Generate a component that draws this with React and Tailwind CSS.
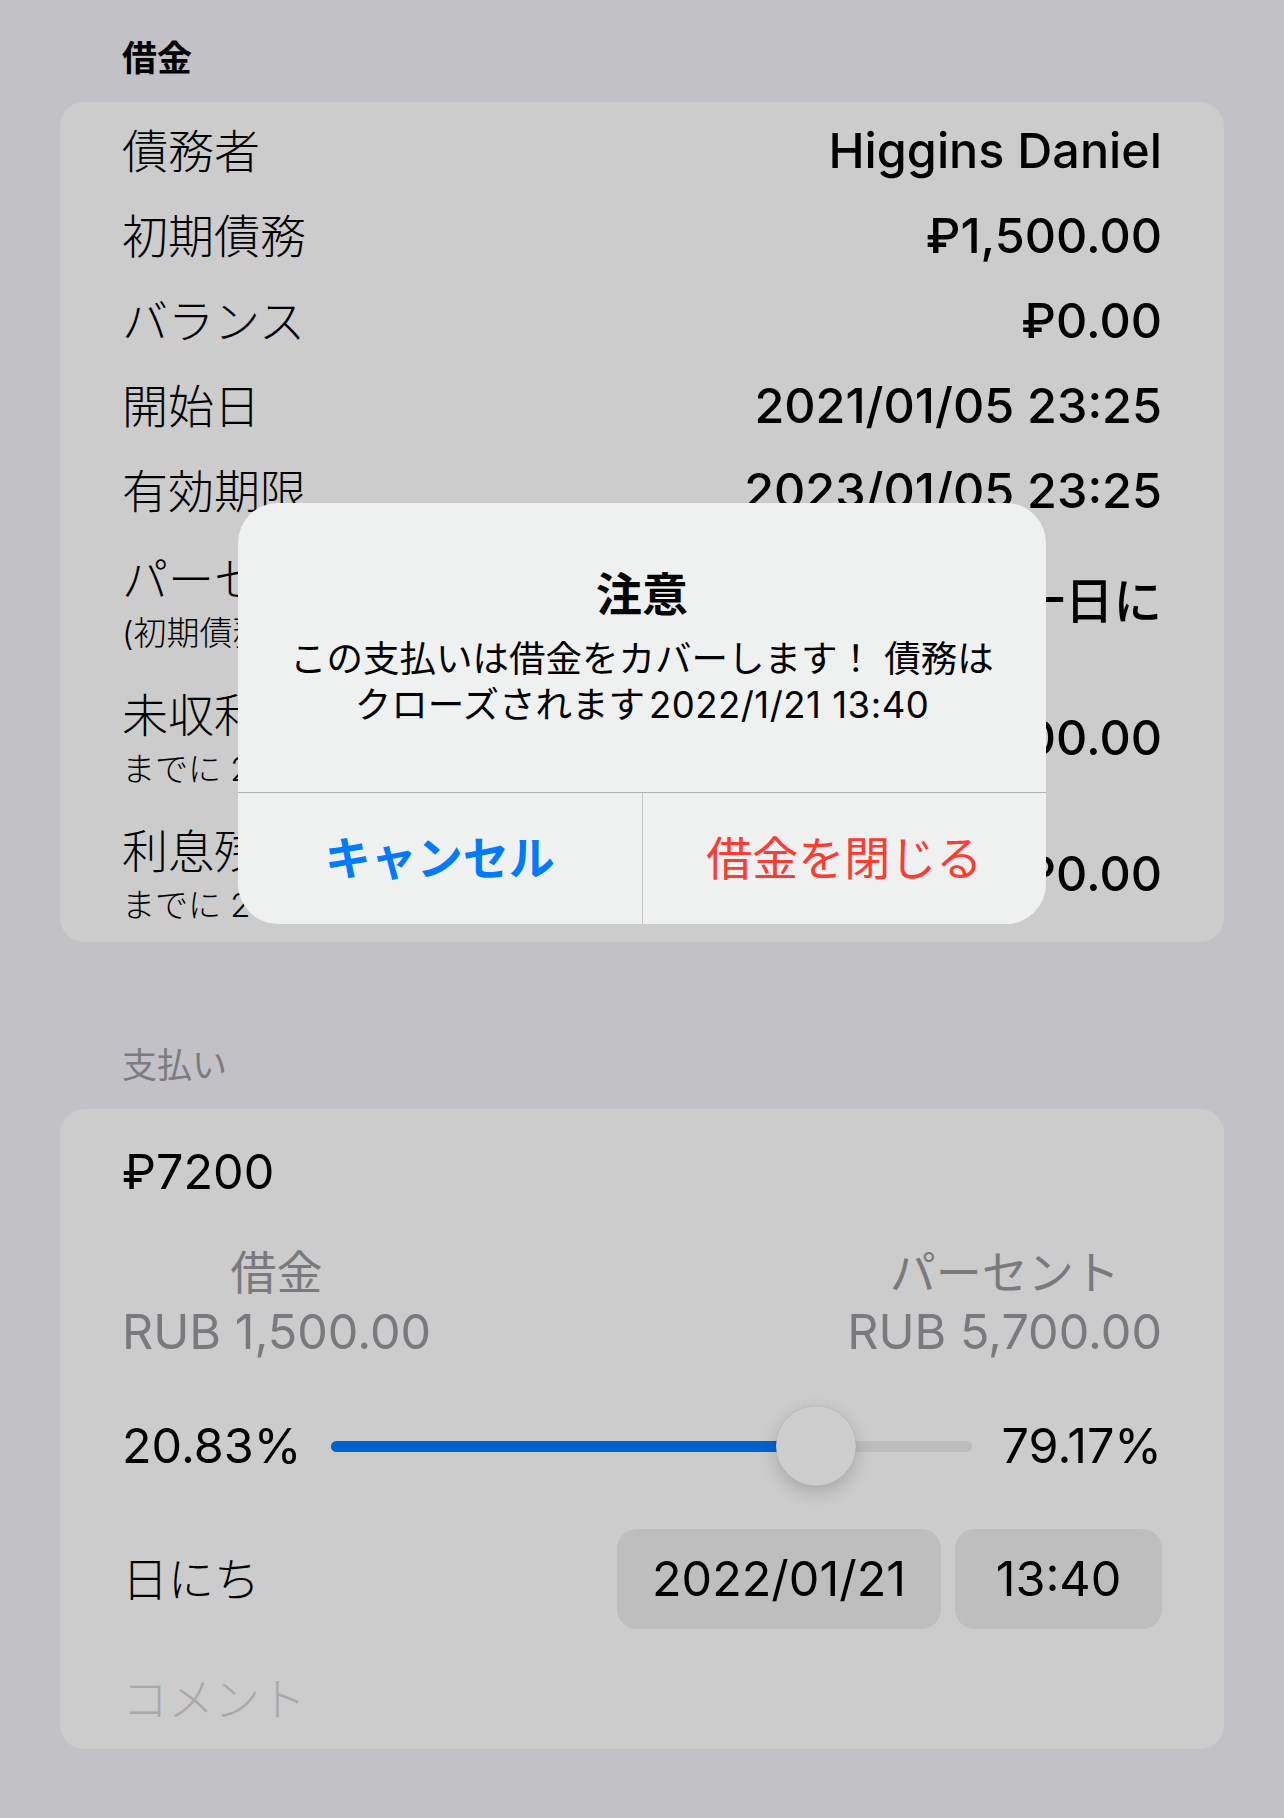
import React from 'react';

const loanRows = [
  { label: '債務者', value: 'Higgins Daniel' },
  { label: '初期債務', value: '₽1,500.00' },
  { label: 'バランス', value: '₽0.00' },
  { label: '開始日', value: '2021/01/05 23:25' },
  { label: '有効期限', value: '2023/01/05 23:25' },
];

const detailRows = [
  { label: 'パーセント', sub: '(初期債務から)', value: '1% 一日に' },
  { label: '未収利息', sub: 'までに 2022/01/21', value: '₽5,700.00' },
  { label: '利息残高', sub: 'までに 2022/01/21', value: '₽0.00' },
];

function Alert() {
  return (
    <div className="absolute left-[238px] top-[503px] w-[808px] h-[421px] bg-[#eff0f0] rounded-[40px] overflow-hidden flex flex-col">
      <div className="h-[289px] pt-[63px] flex flex-col items-center text-black">
        <h2 className="text-[46px] leading-[56px] font-bold">注意</h2>
        <p className="mt-[14px] text-[36.5px] leading-[46px] text-center">
          この支払いは借金をカバーします！ 債務は
          <br />
          クローズされます<span className="ml-[4px] tracking-[0.5px]">2022/1/21 13:40</span>
        </p>
      </div>
      <div className="flex-1 flex border-t border-[#b0b0b0]">
        <button className="flex-1 flex items-center justify-center text-[46px] font-semibold text-[#007aff]">
          キャンセル
        </button>
        <div className="w-px bg-[#c4c4c4]" />
        <button className="flex-1 flex items-center justify-center text-[46px] text-[#ff3b30]">
          借金を閉じる
        </button>
      </div>
    </div>
  );
}

export default function App() {
  const fill = 75.7;

  return (
    <div className="relative min-h-[1818px] bg-[#c1c1c6] font-['Inter','Noto_Sans_CJK_JP',sans-serif] text-black">
      <div className="px-[60px]">
        {/* Loan section */}
        <h1 className="pt-[37px] mb-[23px] px-[62px] text-[35px] leading-[42px] font-bold">借金</h1>
        <div className="bg-[#cccccc] rounded-[24px] px-[62px] pt-[7px]">
          {loanRows.map((row) => (
            <div key={row.label} className="h-[85px] flex items-center justify-between">
              <span className="text-[46px] font-light">{row.label}</span>
              <span className="text-[48.5px] font-medium">{row.value}</span>
            </div>
          ))}
          {detailRows.map((row) => (
            <div key={row.label} className="h-[136px] flex items-center justify-between">
              <div className="flex flex-col">
                <span className="text-[46px] leading-[56px] font-light">{row.label}</span>
                <span className="mt-[6px] text-[33px] leading-[40px] font-light">{row.sub}</span>
              </div>
              <span className="text-[48.5px] font-medium">{row.value}</span>
            </div>
          ))}
        </div>

        {/* Payment section */}
        <h3 className="mt-[102px] mb-[23px] px-[62px] text-[35px] leading-[42px] text-[#7b7b80]">支払い</h3>
        <div className="bg-[#cccccc] rounded-[24px] px-[62px] pt-[35px] pb-[22px]">
          <div className="text-[48.5px] leading-[56px]">₽7200</div>

          <div className="mt-[42px] flex justify-between text-[#7a7a7c] text-[48.5px] leading-[60px]">
            <div className="flex flex-col items-center">
              <span className="text-[46px]">借金</span>
              <span>RUB 1,500.00</span>
            </div>
            <div className="flex flex-col items-center">
              <span className="text-[46px]">パーセント</span>
              <span>RUB 5,700.00</span>
            </div>
          </div>

          <div className="mt-[44px] h-[80px] flex items-center">
            <span className="text-[48.5px]">20.83%</span>
            <div className="relative flex-1 mx-[30px] h-[11px] rounded-full bg-[#bdbdbd]">
              <div className="absolute left-0 top-0 h-full rounded-full bg-[#0062cc]" style={{ width: `${fill}%` }} />
              <div
                className="absolute top-1/2 w-[80px] h-[80px] -translate-x-1/2 -translate-y-1/2 rounded-full bg-[#cdcdcd] shadow-[0_6px_18px_rgba(0,0,0,0.18),0_0_1px_rgba(0,0,0,0.2)]"
                style={{ left: `${fill}%` }}
              />
            </div>
            <span className="text-[48.5px]">79.17%</span>
          </div>

          <div className="mt-[43px] h-[100px] flex items-center justify-between">
            <span className="text-[46px] font-light">日にち</span>
            <div className="flex gap-[14px]">
              <div className="w-[324px] h-[100px] rounded-[20px] bg-[#bebebe] flex items-center justify-center text-[48.5px]">
                2022/01/21
              </div>
              <div className="w-[207px] h-[100px] rounded-[20px] bg-[#bebebe] flex items-center justify-center text-[48.5px]">
                13:40
              </div>
            </div>
          </div>

          <div className="mt-[42px] text-[46px] leading-[56px] text-[#a9a9ab] font-light">コメント</div>
        </div>
      </div>

      <Alert />
    </div>
  );
}
